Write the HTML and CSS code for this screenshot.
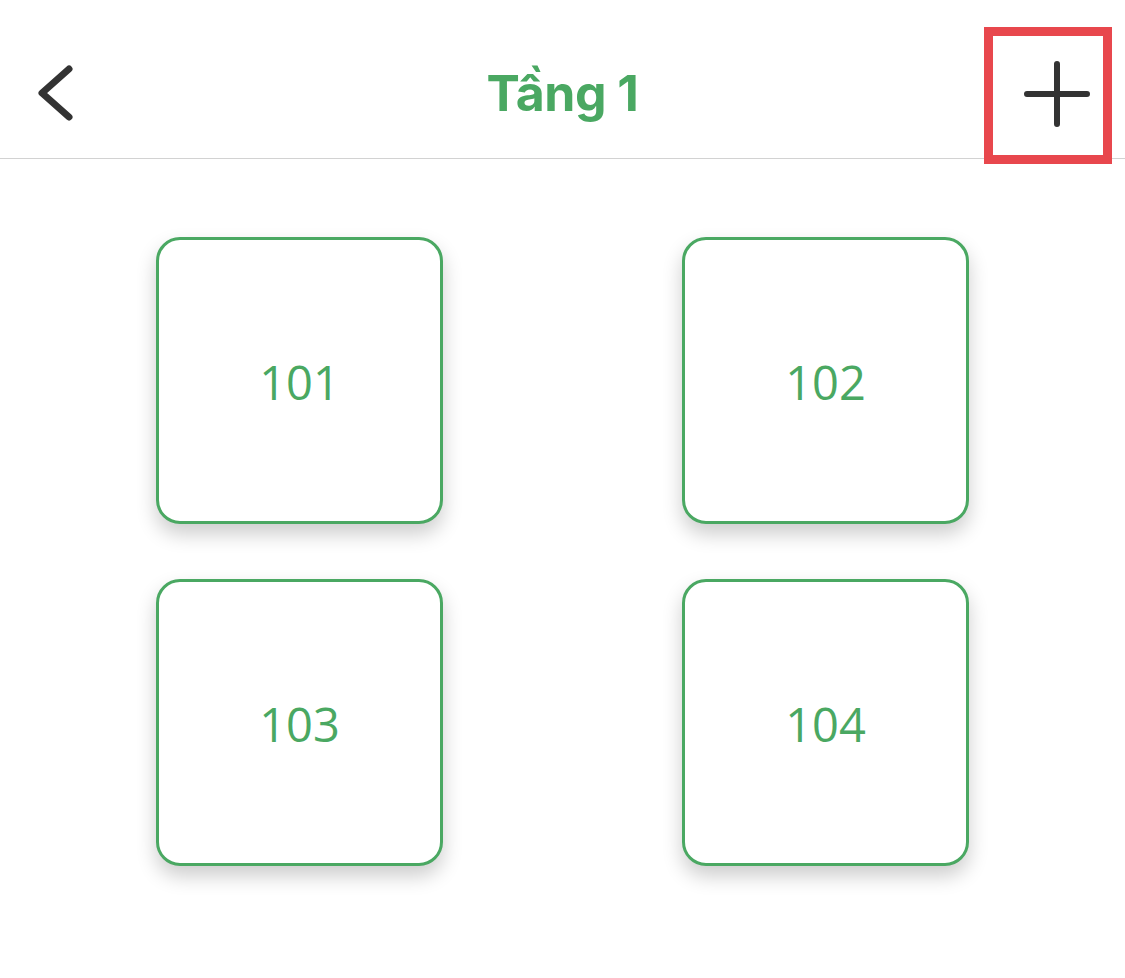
FILE: index.html
```html
<!DOCTYPE html>
<html lang="vi">
<head>
<meta charset="utf-8">
<title>Tầng 1</title>
<link rel="stylesheet" href="styles.css">
</head>
<body>
<header class="header">
  <button class="back" aria-label="Quay lại">
    <svg width="40" height="64" viewBox="0 0 40 64">
      <polyline points="31,8 4,32 31,56" fill="none" stroke="#333" stroke-width="7" stroke-linecap="round" stroke-linejoin="round"/>
    </svg>
  </button>
  <h1 class="title">Tầng 1</h1>
  <button class="add" aria-label="Thêm">
    <svg width="72" height="72" viewBox="0 0 72 72">
      <path d="M6 36 H66 M36 6 V66" fill="none" stroke="#333" stroke-width="6" stroke-linecap="round"/>
    </svg>
  </button>
  <div class="highlight"></div>
</header>
<main class="grid">
  <div class="room">101</div>
  <div class="room">102</div>
  <div class="room">103</div>
  <div class="room">104</div>
</main>
</body>
</html>
```
FILE: styles.css
```css
html, body {
  margin: 0;
  padding: 0;
  background: #ffffff;
}
body {
  font-family: "Inter", "Liberation Sans", sans-serif;
}
.header {
  position: relative;
  height: 158px;
  border-bottom: 1px solid #d2d2d2;
  display: flex;
  align-items: center;
  justify-content: center;
}
.back {
  position: absolute;
  left: 38px;
  top: 61px;
  padding: 0;
  border: 0;
  background: none;
  width: 40px;
  height: 64px;
  display: block;
}
.back svg, .add svg { display: block; }
.title {
  margin: 0;
  font-size: 50px;
  font-weight: 700;
  color: #4aa862;
  letter-spacing: -0.5px;
  line-height: 1;
  padding-top: 28px;
}
.add {
  position: absolute;
  left: 1021px;
  top: 58px;
  padding: 0;
  border: 0;
  background: none;
  width: 72px;
  height: 72px;
}
.highlight {
  position: absolute;
  left: 984px;
  top: 27px;
  width: 128px;
  height: 137px;
  box-sizing: border-box;
  border: 9px solid #e8474d;
  pointer-events: none;
}
.grid {
  display: grid;
  grid-template-columns: 287px 287px;
  grid-auto-rows: 287px;
  column-gap: 239px;
  row-gap: 55px;
  justify-content: center;
  padding-top: 78px;
  padding-bottom: 60px;
}
.room {
  box-sizing: border-box;
  border: 3px solid #4aa862;
  border-radius: 24px;
  background: #ffffff;
  box-shadow: 0 10px 20px rgba(0, 0, 0, 0.2);
  display: flex;
  align-items: center;
  justify-content: center;
  font-family: "Open Sans", "Noto Sans", sans-serif;
  font-size: 47px;
  color: #4aa862;
  padding-top: 2px;
}
```
